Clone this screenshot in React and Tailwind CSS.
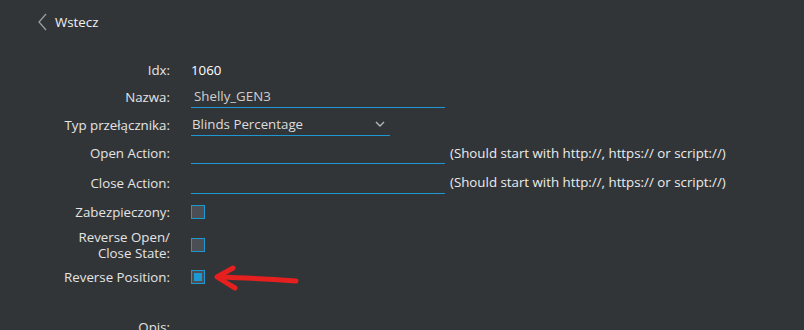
import React from "react";

const Label = ({ children, className = "" }) => (
  <div className={`w-[170px] shrink-0 text-right text-[#e4e4e4] ${className}`}>{children}</div>
);

const Checkbox = ({ checked }) => (
  <div className="w-[14px] h-[14px] border border-[#1d98d3] bg-[#4b4e52] p-[2px]">
    {checked && <div className="w-full h-full bg-[#1d98d3]" />}
  </div>
);

const App = () => {
  return (
    <div
      className="relative w-[804px] h-[330px] overflow-hidden bg-[#323538] text-[13.3px] leading-[18px]"
      style={{ fontFamily: '"Open Sans", "Liberation Sans", sans-serif' }}
    >
      {/* Back */}
      <div className="flex items-center h-[20px] mt-[12px] pl-[38px]">
        <svg width="9" height="18" viewBox="0 0 9 18" className="text-[#9a9c9e]">
          <path d="M8 1 L1 9 L8 17" fill="none" stroke="currentColor" strokeWidth="1.3" />
        </svg>
        <span className="ml-[8px] text-[#f0f0f0]">Wstecz</span>
      </div>

      <div className="mt-[25px]">
        {/* Idx */}
        <div className="flex items-center h-[25px]">
          <Label>Idx:</Label>
          <div className="ml-[21px] text-white">1060</div>
        </div>

        {/* Nazwa */}
        <div className="flex items-center h-[29px]">
          <Label>Nazwa:</Label>
          <div className="ml-[21px] w-[254px] h-[22px] border-b border-[#1d98d3] pl-[3px] text-[#cfcfcf] flex items-center">
            Shelly_GEN3
          </div>
        </div>

        {/* Typ */}
        <div className="flex items-center h-[27px]">
          <Label>Typ przełącznika:</Label>
          <div className="ml-[21px] w-[199px] h-[22px] border-b border-[#1d98d3] pl-[1px] pr-[4px] text-[#dcdcdc] flex items-center justify-between">
            <span>Blinds Percentage</span>
            <svg width="10" height="6" viewBox="0 0 10 6" className="text-[#b5b5b5] mr-[1px]">
              <path d="M1 1 L5 5 L9 1" fill="none" stroke="currentColor" strokeWidth="1.4" />
            </svg>
          </div>
        </div>

        {/* Open Action */}
        <div className="flex items-center h-[30px]">
          <Label>Open Action:</Label>
          <div className="ml-[21px] w-[254px] h-[22px] border-b border-[#1d98d3]" />
          <div className="ml-[5px] mt-[-1px] text-[#ececec]">(Should start with http://, https:// or script://)</div>
        </div>

        {/* Close Action */}
        <div className="flex items-center h-[29px]">
          <Label>Close Action:</Label>
          <div className="ml-[21px] w-[254px] h-[22px] border-b border-[#1d98d3]" />
          <div className="ml-[5px] mt-[-1px] text-[#ececec]">(Should start with http://, https:// or script://)</div>
        </div>

        {/* Zabezpieczony */}
        <div className="flex items-center h-[30px]">
          <Label>Zabezpieczony:</Label>
          <div className="ml-[21px]">
            <Checkbox />
          </div>
        </div>

        {/* Reverse Open/Close State */}
        <div className="flex items-center h-[36px]">
          <Label className="leading-[16px]">
            Reverse Open/
            <br />
            Close State:
          </Label>
          <div className="ml-[21px]">
            <Checkbox />
          </div>
        </div>

        {/* Reverse Position */}
        <div className="flex items-center h-[28px]">
          <Label>Reverse Position:</Label>
          <div className="ml-[21px]">
            <Checkbox checked />
          </div>
        </div>

        {/* Opis */}
        <div className="flex items-center h-[28px] mt-[22px]">
          <Label>Opis:</Label>
        </div>
      </div>

      {/* red annotation arrow */}
      <svg
        className="absolute left-[210px] top-[260px]"
        width="95"
        height="35"
        viewBox="0 0 95 35"
      >
        <g fill="none" stroke="#e5201e" strokeWidth="5" strokeLinecap="round" strokeLinejoin="round">
          <path d="M9 17 Q 40 18 86 21" />
          <path d="M23 8 Q 14 13 7 17 Q 15 22 25 28" />
        </g>
      </svg>
    </div>
  );
};

export default App;
